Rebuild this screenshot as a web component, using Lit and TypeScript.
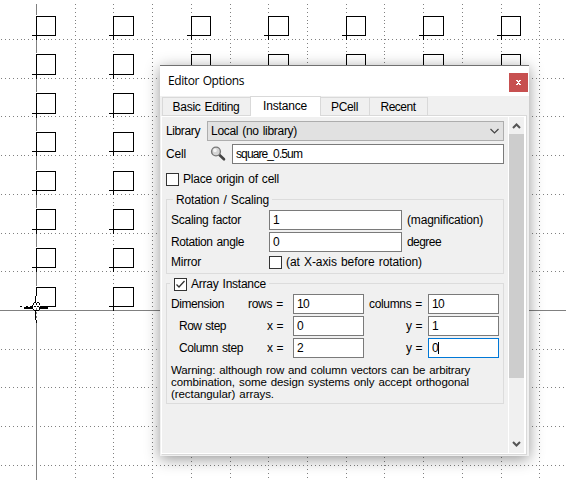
import { LitElement, html, svg, css } from "lit";
import { customElement, property } from "lit/decorators.js";

/** A run of text whose letter spacing is adjusted to fill a given width. */
@customElement("fit-text")
class FitText extends LitElement {
  @property({ type: Number }) w = 0;
  @property() text = "";
  static styles = css`
    :host { display: block; flex: none; white-space: pre; }
    .run { display: inline-block; word-spacing: 1px; }
  `;
  render() {
    return html`<span class="run">${this.text}</span>`;
  }
  updated() {
    const run = this.renderRoot.querySelector(".run") as HTMLElement;
    run.style.letterSpacing = "0px";
    const natural = run.getBoundingClientRect().width;
    run.style.letterSpacing = `${(this.w - natural) / this.text.length}px`;
    this.style.width = `${this.w}px`;
  }
}

const t = (text: string, w: number, cls = "") =>
  html`<fit-text class=${cls} .text=${text} .w=${w}></fit-text>`;

const COLS = [75, 113, 152, 191, 230, 268, 307, 346, 384, 423, 462, 501, 539];
const ROWS = [39, 78, 116, 155, 194, 233, 271, 349, 387, 426, 465];
const SHAPE_X = [[36, 55], [113, 133], [191, 210], [268, 288], [346, 365], [423, 443], [501, 520]];
const SHAPE_Y = [[16, 35], [54, 74], [93, 113], [132, 151], [171, 190], [209, 229], [248, 267], [287, 306]];

@customElement("layout-canvas")
class LayoutCanvas extends LitElement {
  static styles = css`
    :host { display: block; width: 566px; height: 480px; background: #fff; }
    svg { display: block; shape-rendering: crispEdges; }
    .dot { fill: #808080; }
    .axis { fill: #808080; }
    .ink { fill: none; stroke: #000; }
    .solid { fill: #000; }
    .blank { fill: #fff; }
  `;
  dots() {
    let d = "";
    for (const y of ROWS)
      for (let k = -9; k < 137; k++) {
        const x = Math.round(36 + k * 3.873);
        if (k !== 0) d += `M${x} ${y}h1v1h-1z`;
      }
    for (const x of COLS)
      for (let k = -79; k < 44; k++) {
        const y = Math.round(310 + k * 3.873);
        if (y >= 4) d += `M${x} ${y}h1v1h-1z`;
      }
    return d;
  }
  shapes() {
    let d = "";
    for (const [x0, x1] of SHAPE_X)
      for (const [y0, y1] of SHAPE_Y) {
        d += `M${x0 + 0.5} ${y0 + 0.5}H${x1 + 0.5}V${y1 + 0.5}H${x0 + 0.5}z`;
        d += `M${x0 - 4} ${y1 + 0.5}h4M${x0 + 0.5} ${y1}v5`;
      }
    return d;
  }
  /** White gaps in the vertical axis just above each shape. */
  axisGaps() {
    return SHAPE_Y.map(([y0]) => `M36 ${y0 - 1}h1v1h-1z`).join("");
  }
  render() {
    return html`<svg width="566" height="480" viewBox="0 0 566 480">
      ${svg`<path class="dot" d=${this.dots()}/>
      <path class="axis" d="M36 4h1v476h-1zM0 310h566v1H0z"/>
      <path class="blank" d=${this.axisGaps()}/>
      <path class="ink" d=${this.shapes()}/>
      <path class="blank" d="M33 302h7v8h-7zM36 296h1v6h-1zM36 311h1v9h-1z"/>
      <path class="solid" d="M20 306h2v1h-2zM24 307h9v2h-9zM26 306h2v1h-2zM30 306h3v1h-3zM39 307h9v2h-9zM40 306h9v1h-9zM35 296h1v6h-1zM36 287h1v9h-1zM35 311h1v9h-1zM36 320h1v3h-1zM34 302h2v1h-2zM37 302h2v1h-2zM33 303h1v2h-1zM39 303h1v2h-1zM36 303h1v2h-1zM32 305h1v2h-1zM34 306h2v1h-2zM37 306h2v1h-2zM33 309h1v1h-1zM39 309h1v1h-1zM34 310h2v1h-2zM37 310h2v1h-2z"/>
      <path class="axis" d="M36 308h1v2h-1zM36 312h1v2h-1zM36 316h1v2h-1z"/>`}
    </svg>`;
  }
}

@customElement("app-root")
class AppRoot extends LitElement {
  static styles = css`
    * { box-sizing: border-box; }
    :host {
      display: block; position: relative; width: 566px; height: 480px; overflow: hidden;
      font: 12px/20px "Liberation Sans", sans-serif; color: #000;
    }
    .dialog {
      position: absolute; left: 160px; top: 65px; width: 369px; height: 391px;
      display: flex; flex-direction: column; background: #f0f0f0;
      border-top: 1px solid #707070;
      box-shadow: 0 3px 14px rgba(0, 0, 0, .42);
    }
    .title { height: 30px; background: #fff; display: flex; align-items: center; padding: 0 1px 0 8px; justify-content: space-between; flex: none; }
    .title fit-text { font-family: "Open Sans", sans-serif; font-size: 12px; }
    .close { width: 19px; height: 19px; background: #c75050; margin-top: 3px; }
    .close svg, .combo svg, .arrow svg { display: block; }
    .tabs { display: flex; align-items: flex-end; height: 19px; padding-left: 2px; flex: none; }
    .tab { height: 18px; line-height: 18px; border: 1px solid #d9d9d9; border-bottom: 0; display: flex; justify-content: center; margin-left: -1px; padding-right: 1px; }
    .tab:first-child { margin-left: 0; }
    .tab.on { height: 20px; margin-bottom: -1px; background: #fff; position: relative; }
    .pane { flex: 1; margin: 0 2px 1px 1px; border: 1px solid #d9d9d9; border-left-color: #fff; display: flex; min-height: 0; }
    .inner { flex: 1; border: 1px solid #fff; border-left: 0; display: flex; }
    .form { width: 346px; padding: 4px 0 0 4px; }
    .bar { width: 17px; border-left: 1px solid #fff; border-right: 1px solid #fff; display: flex; flex-direction: column; }
    .arrow { height: 17px; }
    .thumb { height: 244px; background: #cdcdcd; }
    .grow { flex: 1; }
    .row { display: flex; align-items: center; height: 20px; }
    .field { height: 20px; border: 1px solid #7a7a7a; background: #fff; line-height: 18px; padding-left: 3px; display: flex; align-items: center; flex: none; }
    .focus { border-color: #0078d7; }
    .caret { width: 1px; height: 12px; background: #000; }
    .combo { width: 297px; height: 20px; line-height: 18px; background: #e1e1e1; border: 1px solid #adadad; display: flex; align-items: center; justify-content: space-between; padding: 0 3px; }
    .check { width: 13px; height: 13px; border: 1px solid #333; background: #fff; flex: none; }
    .check svg { display: block; }
    .group { position: relative; width: 338px; border: 1px solid #dcdcdc; padding-left: 4px; }
    .legend { position: absolute; top: -10px; left: 6px; background: #f0f0f0; height: 20px; display: flex; align-items: center; padding: 0 3px; }
    .g2 .legend { left: 3px; padding-left: 4px; }
    .g1 { height: 75px; margin-top: 10px; padding-top: 10px; }
    .g2 { height: 121px; margin-top: 9px; padding-top: 10px; }
    .gap { margin-top: 2px; }
    .warn { font-size: 11.5px; line-height: 12px; margin-top: 6px; }
    .lib { width: 41px; }
    .cell { width: 44px; }
    .cellrow { margin-top: 3px; }
    .origin { margin-top: 5px; }
    .mag { width: 22px; height: 20px; }
    .lab { width: 98px; flex: none; }
    .first { width: 78px; flex: none; }
    .first.in { padding-left: 8px; }
    .eq { width: 44px; flex: none; display: flex; justify-content: flex-end; padding-right: 10px; }
    .eq2 { width: 64px; flex: none; display: flex; justify-content: flex-end; padding-right: 6px; }
    .w133 { width: 133px; margin-right: 5px; }
    .w71 { width: 71px; }
    .w272 { width: 272px; }
    .after { margin-left: 4px; }
  `;

  arrayRow(label: string, lw: number, indent: boolean, a: string, aw: number, av: string, b: string, bw: number, bv: string, focus = false) {
    const vw = (v: string) => v.length * 6;
    return html`<div class="row ${label === "Dimension" ? "" : "gap"}">
      <div class="first ${indent ? "in" : ""}">${t(label, lw)}</div>
      <div class="eq">${t(a, aw)}</div>
      <div class="field w71">${t(av, vw(av))}</div>
      <div class="eq2">${t(b, bw)}</div>
      <div class="field w71 ${focus ? "focus" : ""}">${t(bv, vw(bv))}${focus ? html`<span class="caret"></span>` : ""}</div>
    </div>`;
  }

  render() {
    return html`
      <layout-canvas></layout-canvas>
      <div class="dialog">
        <div class="title">
          ${t("Editor Options", 76)}
          <div class="close"><svg width="19" height="19" viewBox="0 0 19 19" shape-rendering="crispEdges"><path fill="#fff" d="M7 7h2v1h1v-1h2v1h-1v1h-1v1h1v1h1v1h-2v-1h-1v1h-2v-1h1v-1h1v-1h-1v-1h-1z"/></svg></div>
        </div>
        <div class="tabs">
          <div class="tab" style="width:89px">${t("Basic Editing", 67)}</div>
          <div class="tab on" style="width:71px">${t("Instance", 44)}</div>
          <div class="tab" style="width:50px">${t("PCell", 27)}</div>
          <div class="tab" style="width:59px">${t("Recent", 35)}</div>
        </div>
        <div class="pane"><div class="inner">
          <div class="form">
            <div class="row"><div class="lib">${t("Library", 34)}</div>
              <div class="combo">${t("Local (no library)", 86)}
                <svg width="11" height="8" viewBox="0 0 11 8"><path d="M1.5 2L5.5 6L9.5 2" fill="none" stroke="#444" stroke-width="1.2"/></svg></div>
            </div>
            <div class="row cellrow"><div class="cell">${t("Cell", 20)}</div>
              <svg class="mag" viewBox="0 0 22 20"><path d="M9.5 11L14 15.3" stroke="#444" stroke-width="2.6" stroke-linecap="round"/><circle cx="6" cy="7.5" r="4.4" fill="#d4d4d4" stroke="#777" stroke-width="1.4"/><circle cx="5" cy="6.4" r="1.8" fill="#f4f4f4"/></svg>
              <div class="field w272">${t("square_0.5um", 66)}</div>
            </div>
            <div class="row origin"><div class="check"></div>${t("Place origin of cell", 96, "after")}</div>
            <div class="group g1">
              <div class="legend">${t("Rotation / Scaling", 93)}</div>
              <div class="row"><div class="lab">${t("Scaling factor", 70)}</div><div class="field w133">${t("1", 6)}</div>${t("(magnification)", 76)}</div>
              <div class="row gap"><div class="lab">${t("Rotation angle", 73)}</div><div class="field w133">${t("0", 6)}</div>${t("degree", 34)}</div>
              <div class="row"><div class="lab">${t("Mirror", 30)}</div><div class="check"></div>${t("(at X-axis before rotation)", 136, "after")}</div>
            </div>
            <div class="group g2">
              <div class="legend"><div class="check"><svg width="11" height="11" viewBox="0 0 11 11"><path d="M1.5 5.5L4 8L9.5 2" fill="none" stroke="#333" stroke-width="1.3"/></svg></div>${t("Array Instance", 75, "after")}</div>
              ${this.arrayRow("Dimension", 53, false, "rows =", 35, "10", "columns =", 53, "10")}
              ${this.arrayRow("Row step", 47, true, "x =", 16, "0", "y =", 16, "1")}
              ${this.arrayRow("Column step", 64, true, "x =", 16, "2", "y =", 16, "0", true)}
              <div class="warn">
                ${t("Warning: although row and column vectors can be arbitrary", 299)}
                ${t("combination, some design systems only accept orthogonal", 298)}
                ${t("(rectangular) arrays.", 103)}
              </div>
            </div>
          </div>
          <div class="bar">
            <div class="arrow"><svg width="15" height="17" viewBox="0 0 15 17"><path d="M4 11L7.5 7.5L11 11" fill="none" stroke="#555" stroke-width="2"/></svg></div>
            <div class="thumb"></div>
            <div class="grow"></div>
            <div class="arrow"><svg width="15" height="17" viewBox="0 0 15 17"><path d="M4 6L7.5 9.5L11 6" fill="none" stroke="#555" stroke-width="2"/></svg></div>
          </div>
        </div></div>
      </div>`;
  }
}
